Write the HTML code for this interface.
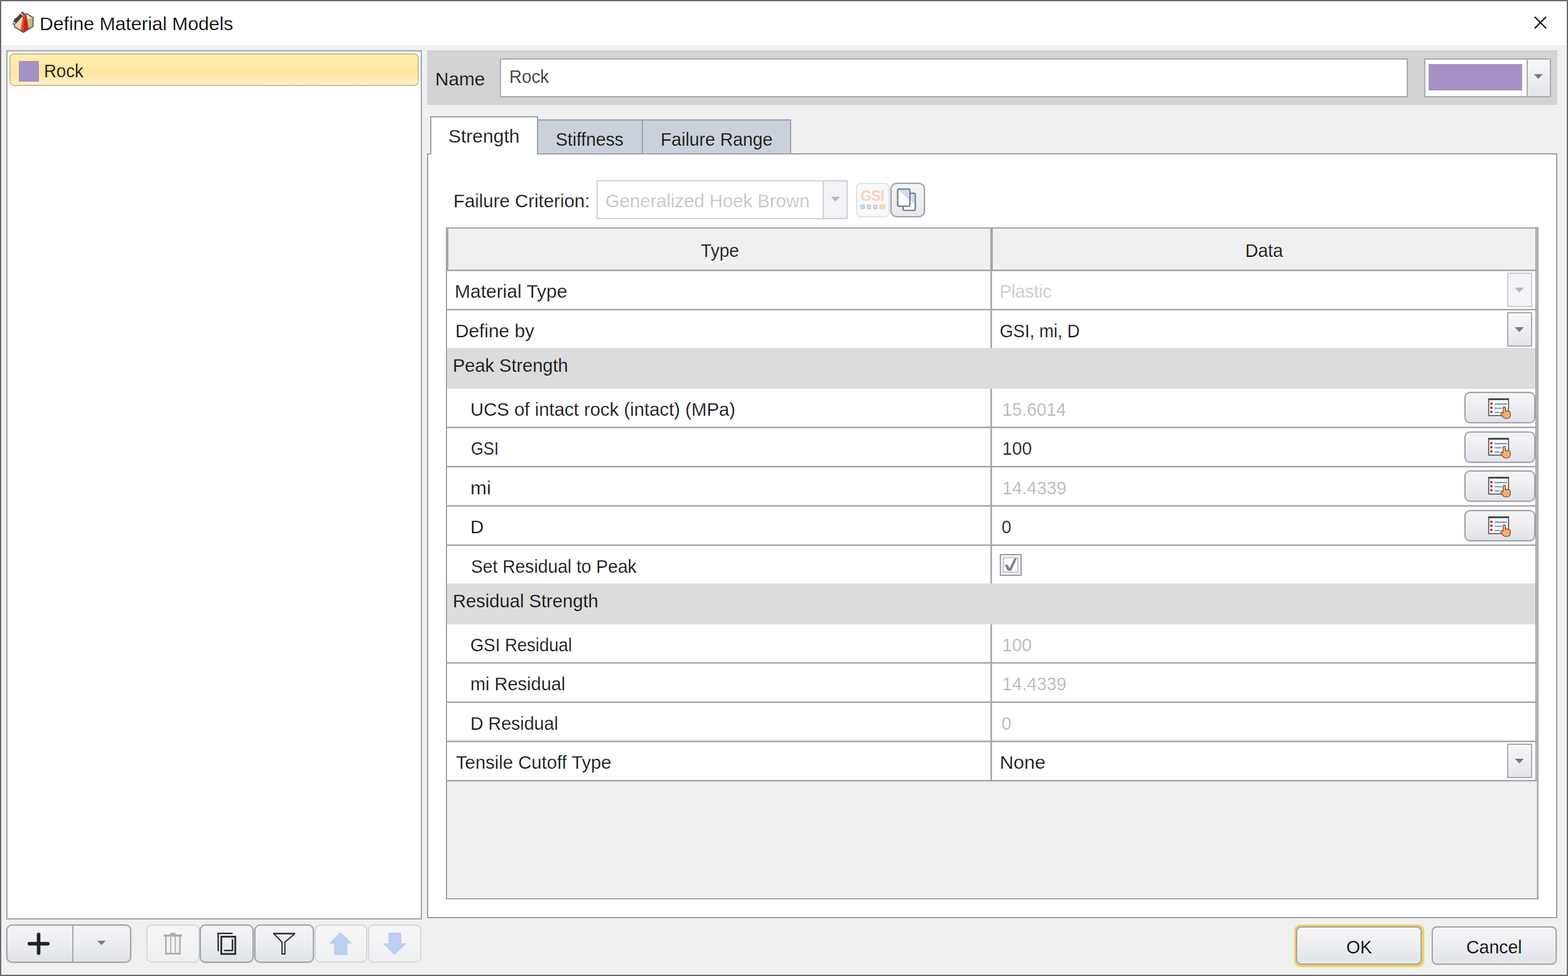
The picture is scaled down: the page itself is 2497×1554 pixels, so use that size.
<!DOCTYPE html>
<html lang="en">
<head>
<meta charset="utf-8">
<title>Define Material Models</title>
<style>
html,body{margin:0;padding:0;background:#f0f0f0;}
body{width:2497px;height:1554px;overflow:hidden;font-family:"Liberation Sans",sans-serif;}
#win{position:relative;width:2497px;height:1554px;background:#f0f0f0;overflow:hidden;}
.a,.t,svg{position:absolute;box-sizing:border-box;}
svg{overflow:visible;}
button{margin:0;padding:0;font:inherit;color:inherit;appearance:none;-webkit-appearance:none;outline:0;display:block;}
ul,li,h1{margin:0;padding:0;list-style:none;font:inherit;}
.g,table,thead,tbody,tr,th,td{display:contents;}
.t{-webkit-text-stroke:0.25px #fff;white-space:nowrap;line-height:40px;height:40px;font-size:29.5px;font-weight:400;transform-origin:0 0;}
.frame{border:2px solid #6a6a6a;pointer-events:none;}
.titlebar{background:#fff;}
.list{background:#fff;border:2px solid #a0a4ac;border-top-color:#9ba3b0;}
.item{border:2px solid #d0be8c;border-radius:7px;background:linear-gradient(#ffedab 0%,#ffe9a5 40%,#ffe6a0 58%,#fdf0c8 100%);}
.sw{background:#a591c5;}
.strip{background:#d3d3d3;}
.input{background:#fff;border:2px solid #a9abb0;}
.tab{border:2px solid #9da3ad;border-bottom:none;background:#cbd1da;}
.tab.sel{background:#fff;}
.tabline{background:#9da3ad;}
.panel{background:#fff;border:2px solid #9da3ad;}
.combo{background:#fff;border:2px solid #a9abb0;}
.combo.dis{border-color:#d0d1d4;}
.ddbtn{border:2px solid #a9abb0;background:linear-gradient(#f7f8f9,#e3e6ea);}
.ddbtn.dis{border-color:#cdcfd3;background:#f3f4f7;}
.btn{border:2px solid #9fa4ad;box-shadow:0 0 0 1px rgba(150,155,166,.22);border-radius:9px;background:linear-gradient(#f4f5f7 0%,#eceef1 50%,#dfe2e7 100%);}
.btn.big{border-radius:8px;border-color:#a1a5ad;box-shadow:inset 0 0 0 1px rgba(255,255,255,.55),0 0 0 1px rgba(150,155,166,.15);}
.btn.dis{box-shadow:none;border-color:#d6d8dc;background:linear-gradient(#f6f7f8,#eff0f2);}
.btn.gsi{border-color:#e2e3e6;background:#f7f8fa;border-radius:8px;}
.btn.cp{border-color:#a0a3a9;border-radius:10px;background:linear-gradient(#f3f4f6,#e8e9ec);}
.btn.pk{border-radius:9px;border-color:#a0a4ac;}
.sep{background:#a3a7af;}
.focus{border-radius:9.5px;background:#f3d35a;}
.table{background:#f0f0f0;border:2px solid #a3a3a3;}
.thead{background:#f0f0f0;}
.rows{background:#fff;}
.hl{background:#a6a6a6;}
.gap{background:#c9c9c9;}
.band{background:#dcdcdc;}
.chk{border:2px solid #9c9fa6;background:#eef1f6;}
.chk2{border:2px solid #c6c9cd;background:#fff;}
</style>
</head>
<body>
<div id="win" role="dialog" aria-label="Define Material Models">
  <header class="a titlebar" style="left:0px;top:0px;width:2497px;height:72px">
    <svg class="appicon" style="left:18px;top:16px" width="38" height="38" viewBox="18 16 38 38" aria-hidden="true"><g stroke-linejoin="round">
<polygon points="42.2,21.6 52.6,27.8 52.6,42.2 37.6,51.4 23.4,42.8 23.4,30.4" fill="#f2e4b7" stroke="#5f5a46" stroke-width="1.5"/>
<polygon points="38,33.5 52.8,27.6 52.8,42.3 37.6,52" fill="#c9b783"/>
<polygon points="23.2,30 38,33.5 37.6,52 23.2,43" fill="#eadaa8"/>
<polygon points="36.5,24.5 41.5,22 45.5,46.5 37.6,51.3 32.8,48.5" fill="#e8432e"/>
<polygon points="38.5,33 41.5,22 45.5,46.5 37.6,51.3" fill="#c61f2c"/>
<polygon points="23.2,42.2 37.6,51.2 37.6,52.4 23.2,43.6" fill="#7a4a3a"/>
<polygon points="42.2,21.6 52.6,27.8 52.6,42.2 37.6,51.4 23.4,42.8 23.4,30.4" fill="none" stroke="#5f5a46" stroke-width="1.4"/>
<path d="M35.6 18.3 L39.6 21.9 L25.6 37.2 L21.6 33.6 Z" fill="#3f4245"/>
<path d="M33.6 20.4 L37.7 24 L36.4 25.4 L32.3 21.8 Z" fill="#d9d9d9"/>
<path d="M21.6 33.6 L25.6 37.2 L20.4 39.2 Z" fill="#f4f4f4" stroke="#3f4245" stroke-width="0.8"/>
<path d="M21.3 36.9 L22.5 38 L20.4 39.2 Z" fill="#3f4245"/>
</g></svg>
    <h1 class="t" style="left:63.4px;top:17.77px;transform:scaleX(1.0217);color:#000">Define Material Models</h1>
    <div class="a close" style="left:2436px;top:18px;width:34px;height:36px" role="button" aria-label="Close">
      <svg class="ic" style="left:0px;top:0px" width="34" height="36" viewBox="2436 18 34 36" aria-hidden="true"><path d="M2443.9 26.7 L2462.2 45.2 M2462.2 26.7 L2443.9 45.2" stroke="#111" stroke-width="2.1" fill="none"/></svg>
    </div>
  </header>
  <aside class="g">
    <ul class="a list" style="left:10px;top:80px;width:662px;height:1384px" role="listbox" aria-label="Materials">
      <li class="a item" style="left:3px;top:3px;width:652px;height:52px" role="option" aria-selected="true">
        <span class="a sw" style="left:13px;top:10px;width:32px;height:33px"></span>
        <span class="t" style="left:52.7px;top:5.77px;transform:scaleX(0.9317);color:#111;-webkit-text-stroke-color:#ffe8a3">Rock</span>
      </li>
    </ul>
    <div class="g toolbar" role="toolbar" aria-label="Material list actions">
      <button class="a btn add" style="left:10px;top:1472px;width:199px;height:61px" type="button" aria-label="Add material">
        <span class="a sep" style="left:103px;top:0px;width:2px;height:57px"></span>
        <svg class="ic" style="left:-2px;top:-2px" width="199" height="61" viewBox="10 1472 199 61" aria-hidden="true"><path d="M61.5 1487.8 V1517.4 M46.7 1502.6 H76.3" stroke="#232327" stroke-width="5.6" stroke-linecap="round" fill="none"/><polygon points="154.7,1497.8 168.4,1497.8 161.55,1504.8" fill="#777a84"/></svg>
      </button>
      <button class="a btn dis" style="left:233px;top:1472px;width:85px;height:61px" type="button" aria-label="Delete" disabled>
        <svg class="ic" style="left:-2px;top:-2px" width="85" height="61" viewBox="233 1472 85 61" aria-hidden="true"><g fill="#acacac"><rect x="271.6" y="1485.3" width="8" height="2.9"/><rect x="260.7" y="1487.9" width="29.3" height="3.5"/><rect x="263" y="1491.4" width="2.4" height="28.4"/><rect x="285.3" y="1491.4" width="2.4" height="28.4"/><rect x="263" y="1517.1" width="24.7" height="2.7"/><rect x="271" y="1491.4" width="1.6" height="26"/><rect x="278.5" y="1491.4" width="1.6" height="26"/></g></svg>
      </button>
      <button class="a btn" style="left:318px;top:1472px;width:86px;height:61px" type="button" aria-label="Copy">
        <svg class="ic" style="left:-2px;top:-2px" width="86" height="61" viewBox="318 1472 86 61" aria-hidden="true"><g stroke="#2a2a2e" fill="none" stroke-linejoin="miter"><path d="M370.4 1486.1 H347.5 V1514.6" stroke-width="2.3"/><rect x="352.4" y="1491.4" width="22.3" height="27.5" stroke-width="2.8"/><path d="M370.2 1495.2 V1513.4 H356.7" stroke-width="2.3"/></g></svg>
      </button>
      <button class="a btn" style="left:405px;top:1472px;width:95px;height:61px" type="button" aria-label="Filter">
        <svg class="ic" style="left:-2px;top:-2px" width="95" height="61" viewBox="405 1472 95 61" aria-hidden="true"><g stroke="#2a2a2e" fill="none"><path d="M435 1486.6 H470.2" stroke-width="2.5"/><path d="M436.6 1487.4 L449.1 1500 V1519 H453.7 V1500 L468.6 1487.4" stroke-width="1.9"/></g></svg>
      </button>
      <button class="a btn dis" style="left:501px;top:1472px;width:84px;height:61px" type="button" aria-label="Move up" disabled>
        <svg class="ic" style="left:-2px;top:-2px" width="84" height="61" viewBox="501 1472 84 61" aria-hidden="true"><polygon points="542,1484.8 559.7,1502 552.5,1502 552.5,1520 532.8,1520 532.8,1502 525,1502" fill="#bccff4" stroke="#aec4ef" stroke-width="0.8"/></svg>
      </button>
      <button class="a btn dis" style="left:586px;top:1472px;width:85px;height:61px" type="button" aria-label="Move down" disabled>
        <svg class="ic" style="left:-2px;top:-2px" width="85" height="61" viewBox="586 1472 85 61" aria-hidden="true"><polygon points="619.3,1485.4 638.4,1485.4 638.4,1502.7 646.2,1502.7 628.3,1520 610.4,1502.7 619.3,1502.7" fill="#bccff4" stroke="#aec4ef" stroke-width="0.8"/></svg>
      </button>
    </div>
  </aside>
  <main class="g">
    <div class="a strip" style="left:680px;top:80px;width:1800px;height:87px">
      <label class="t" style="left:12.57px;top:25.77px;transform:scaleX(1.0081);color:#111;-webkit-text-stroke-color:#d4d4d4">Name</label>
      <div class="a input" style="left:116px;top:13px;width:1446px;height:62px" role="textbox" aria-label="Name">
        <span class="t" style="left:13.1px;top:6.77px;transform:scaleX(0.9388);color:#333">Rock</span>
      </div>
      <div class="a input colour" style="left:1588px;top:13px;width:202px;height:62px" role="combobox" aria-label="Colour">
        <span class="a sw" style="left:5px;top:7px;width:149px;height:42px"></span>
        <span class="a ddbtn" style="left:161px;top:-2px;width:39px;height:62px">
          <svg class="ic" style="left:-2px;top:-2px" width="39" height="62" viewBox="2431 93 39 62" aria-hidden="true"><polygon points="2442.7,118 2456.7,118 2449.7,125.7" fill="#777a84"/></svg>
        </span>
      </div>
    </div>
    <section class="a panel" style="left:680px;top:244px;width:1800px;height:1218px" role="tabpanel" aria-label="Strength">
      <label class="t" style="left:39.99px;top:54.07px;transform:scaleX(0.9966);color:#111">Failure Criterion:</label>
      <div class="a combo dis" style="left:268px;top:41px;width:400px;height:62px" role="combobox" aria-disabled="true" aria-label="Failure Criterion">
        <span class="t" style="left:11.54px;top:11.07px;transform:scaleX(0.9917);color:#c4c4c4">Generalized Hoek Brown</span>
        <span class="a ddbtn dis" style="left:358px;top:-2px;width:40px;height:62px">
          <svg class="ic" style="left:-2px;top:-2px" width="40" height="62" viewBox="1310 287 40 62" aria-hidden="true"><polygon points="1323.2,313.3 1337.6,313.3 1330.4,321" fill="#b6b7ba"/></svg>
        </span>
      </div>
      <button class="a btn dis gsi" style="left:681px;top:45px;width:54px;height:55px" type="button" aria-label="GSI calculator" disabled>
        <svg class="ic" style="left:-2px;top:-2px" width="54" height="55" viewBox="1363 291 54 55" aria-hidden="true"><text x="1370.6" y="320" font-family="Liberation Sans, sans-serif" font-weight="bold" font-size="23.6" textLength="38" lengthAdjust="spacingAndGlyphs" fill="#f8d1ba">GSI</text><g fill="#b7cfe1"><rect x="1370.2" y="325.7" width="6.8" height="7.3"/><rect x="1380.6" y="325.7" width="6.6" height="7.3"/><rect x="1390.7" y="325.7" width="6.6" height="7.3"/></g><rect x="1400.4" y="325.7" width="9.2" height="7.3" fill="#fbd0aa"/><g fill="#e3eff8"><rect x="1372.4" y="328.1" width="2.5" height="2.6"/><rect x="1382.7" y="328.1" width="2.5" height="2.6"/><rect x="1392.8" y="328.1" width="2.5" height="2.6"/></g><rect x="1403.3" y="328.1" width="3.4" height="2.6" fill="#fde3c9"/></svg>
      </button>
      <button class="a btn cp" style="left:736px;top:45px;width:55px;height:55px" type="button" aria-label="Copy">
        <svg class="ic" style="left:-2px;top:-2px" width="55" height="55" viewBox="1418 291 55 55" aria-hidden="true"><g stroke="#6f7a8e" stroke-width="1.8" stroke-linejoin="round"><rect x="1438.3" y="307.7" width="19.2" height="27.4" rx="2.3" fill="#fff"/><path d="M1439.6 308.8 H1455 q1.5 0 1.5 1.5 V326 Z" fill="#cfdbee" stroke="none"/><rect x="1438.3" y="307.7" width="19.2" height="27.4" rx="2.3" fill="none"/><rect x="1429.5" y="301" width="19.6" height="27.4" rx="2.3" fill="#fff"/><path d="M1430.8 302 H1446.8 q1.4 0 1.4 1.4 V319.6 Z" fill="#cfdbee" stroke="none"/><rect x="1429.5" y="301" width="19.6" height="27.4" rx="2.3" fill="none"/></g></svg>
      </button>
      <div class="a table" style="left:28px;top:116px;width:1740px;height:1070px">
        <div class="a thead" style="left:0px;top:0px;width:1736px;height:66px"></div>
        <div class="a rows" style="left:0px;top:66px;width:1735px;height:814px"></div>
        <div class="a hl" style="left:865px;top:0px;width:4px;height:66px"></div>
        <div class="a hl" style="left:0px;top:0px;width:2px;height:66px"></div>
        <div class="a hl" style="left:1733px;top:0px;width:2px;height:880px"></div>
        <svg class="gridlines" style="left:0px;top:0px" width="1736" height="1066" viewBox="712 364 1736 1066" aria-hidden="true"><g fill="#a3a3a3"><rect x="712" y="429.30" width="1735" height="2.4"/><rect x="712" y="491.80" width="1735" height="2.4"/><rect x="712" y="679.30" width="1735" height="2.4"/><rect x="712" y="741.80" width="1735" height="2.4"/><rect x="712" y="804.30" width="1735" height="2.4"/><rect x="712" y="866.80" width="1735" height="2.4"/><rect x="712" y="1054.30" width="1735" height="2.4"/><rect x="712" y="1116.80" width="1735" height="2.4"/><rect x="712" y="1179.30" width="1735" height="2.4"/><rect x="712" y="1241.80" width="1735" height="2.4"/><rect x="1577.2" y="430" width="2.5" height="124"/><rect x="1577.2" y="619" width="2.5" height="310"/><rect x="1577.2" y="994" width="2.5" height="249.7"/></g></svg>
        <div class="a gap" style="left:1735px;top:0px;width:1px;height:1066px"></div>
        <table>
          <thead>
            <tr>
              <th scope="col">
                <span class="t" style="left:403.91px;top:14.67px;transform:scaleX(0.9536);color:#111;-webkit-text-stroke-color:#f0f0f0">Type</span>
              </th>
              <th scope="col">
                <span class="t" style="left:1270.65px;top:14.67px;transform:scaleX(0.9643);color:#111;-webkit-text-stroke-color:#f0f0f0">Data</span>
              </th>
            </tr>
          </thead>
          <tbody>
            <tr>
              <th scope="row">
                <span class="t" style="left:12.45px;top:79.87px;transform:scaleX(1.0161);color:#111">Material Type</span>
              </th>
              <td>
                <span class="t" style="left:880.11px;top:79.87px;transform:scaleX(0.9479);color:#c8c8c8">Plastic</span>
                <span class="a ddbtn dis" style="left:1688px;top:70px;width:40px;height:55px" role="button" aria-label="Material Type" aria-disabled="true">
                  <svg class="ic" style="left:-2px;top:-2px" width="40" height="55" viewBox="2400 434 40 55" aria-hidden="true"><polygon points="2412.3,458 2426.7,458 2419.5,465.7" fill="#b6b7ba"/></svg>
                </span>
              </td>
            </tr>
            <tr>
              <th scope="row">
                <span class="t" style="left:12.51px;top:143.37px;transform:scaleX(1.0100);color:#111">Define by</span>
              </th>
              <td>
                <span class="t" style="left:880.26px;top:143.37px;transform:scaleX(0.9374);color:#111">GSI, mi, D</span>
                <span class="a ddbtn" style="left:1688px;top:133px;width:40px;height:55px" role="button" aria-label="Define by">
                  <svg class="ic" style="left:-2px;top:-2px" width="40" height="55" viewBox="2400 497 40 55" aria-hidden="true"><polygon points="2412.3,521 2426.7,521 2419.5,528.7" fill="#777a84"/></svg>
                </span>
              </td>
            </tr>
            <tr class="grp">
              <th colspan="2" scope="rowgroup">
                <span class="a band" style="left:0px;top:190px;width:1733px;height:65px"></span>
                <span class="t" style="left:9.34px;top:197.57px;transform:scaleX(0.9820);color:#111;-webkit-text-stroke-color:#dcdcdc">Peak Strength</span>
              </th>
            </tr>
            <tr>
              <th scope="row">
                <span class="t" style="left:36.73px;top:268.37px;transform:scaleX(0.9941);color:#111">UCS of intact rock (intact) (MPa)</span>
              </th>
              <td>
                <span class="t" style="left:883.98px;top:268.37px;transform:scaleX(0.9543);color:#b8b8b8">15.6014</span>
                <button class="a btn pk" style="left:1620px;top:260px;width:113px;height:50px" type="button" aria-label="Pick UCS">
                  <svg class="ic" style="left:-2px;top:-2px" width="113" height="50" viewBox="2332 624 113 50" aria-hidden="true"><g transform="translate(2332,624)"><rect x="38.7" y="11.6" width="31.6" height="26" fill="#fff" stroke="#4d4d4d" stroke-width="1.6"/><rect x="37.9" y="10.2" width="33.2" height="2.9" fill="#454545"/><g fill="#cf1524"><rect x="41.2" y="16.9" width="3.5" height="3.6" rx=".8"/><rect x="41.2" y="23.3" width="3.5" height="3.6" rx=".8"/><rect x="41.2" y="29.9" width="3.5" height="3.6" rx=".8"/></g><path d="M48.1 19.4 H68 M48.1 26 H60 M48.1 32.6 H56" stroke="#3f86d9" stroke-width="1.7" fill="none"/><path d="M61.6 26.2 q0-2.6 1.9-2.6 q1.9 0 1.9 2.6 v4.6 q1.3-1.3 2.6-.2 q1.6-1 2.6 .6 q2.6-.4 2.6 2.4 v3 q0 5.6 -5.4 5.6 h-2.4 q-2.6 0 -4.4 -2.6 l-2.9 -4.3 q-.9 -1.6 .5 -2.5 q1.4 -.7 2.4 .6 l.6 .8 z" fill="#f6ad6d" stroke="#7a4516" stroke-width="1.15" stroke-linejoin="round"/></g></svg>
                </button>
              </td>
            </tr>
            <tr>
              <th scope="row">
                <span class="t" style="left:37.81px;top:329.87px;transform:scaleX(0.8660);color:#111">GSI</span>
              </th>
              <td>
                <span class="t" style="left:883.92px;top:329.87px;transform:scaleX(0.9579);color:#222">100</span>
                <button class="a btn pk" style="left:1620px;top:323px;width:113px;height:50px" type="button" aria-label="Pick GSI">
                  <svg class="ic" style="left:-2px;top:-2px" width="113" height="50" viewBox="2332 687 113 50" aria-hidden="true"><g transform="translate(2332,687)"><rect x="38.7" y="11.6" width="31.6" height="26" fill="#fff" stroke="#4d4d4d" stroke-width="1.6"/><rect x="37.9" y="10.2" width="33.2" height="2.9" fill="#454545"/><g fill="#cf1524"><rect x="41.2" y="16.9" width="3.5" height="3.6" rx=".8"/><rect x="41.2" y="23.3" width="3.5" height="3.6" rx=".8"/><rect x="41.2" y="29.9" width="3.5" height="3.6" rx=".8"/></g><path d="M48.1 19.4 H68 M48.1 26 H60 M48.1 32.6 H56" stroke="#3f86d9" stroke-width="1.7" fill="none"/><path d="M61.6 26.2 q0-2.6 1.9-2.6 q1.9 0 1.9 2.6 v4.6 q1.3-1.3 2.6-.2 q1.6-1 2.6 .6 q2.6-.4 2.6 2.4 v3 q0 5.6 -5.4 5.6 h-2.4 q-2.6 0 -4.4 -2.6 l-2.9 -4.3 q-.9 -1.6 .5 -2.5 q1.4 -.7 2.4 .6 l.6 .8 z" fill="#f6ad6d" stroke="#7a4516" stroke-width="1.15" stroke-linejoin="round"/></g></svg>
                </button>
              </td>
            </tr>
            <tr>
              <th scope="row">
                <span class="t" style="left:36.84px;top:393.37px;transform:scaleX(1.0574);color:#111">mi</span>
              </th>
              <td>
                <span class="t" style="left:883.97px;top:393.37px;transform:scaleX(0.9589);color:#b8b8b8">14.4339</span>
                <button class="a btn pk" style="left:1620px;top:385px;width:113px;height:50px" type="button" aria-label="Pick mi">
                  <svg class="ic" style="left:-2px;top:-2px" width="113" height="50" viewBox="2332 749 113 50" aria-hidden="true"><g transform="translate(2332,749)"><rect x="38.7" y="11.6" width="31.6" height="26" fill="#fff" stroke="#4d4d4d" stroke-width="1.6"/><rect x="37.9" y="10.2" width="33.2" height="2.9" fill="#454545"/><g fill="#cf1524"><rect x="41.2" y="16.9" width="3.5" height="3.6" rx=".8"/><rect x="41.2" y="23.3" width="3.5" height="3.6" rx=".8"/><rect x="41.2" y="29.9" width="3.5" height="3.6" rx=".8"/></g><path d="M48.1 19.4 H68 M48.1 26 H60 M48.1 32.6 H56" stroke="#3f86d9" stroke-width="1.7" fill="none"/><path d="M61.6 26.2 q0-2.6 1.9-2.6 q1.9 0 1.9 2.6 v4.6 q1.3-1.3 2.6-.2 q1.6-1 2.6 .6 q2.6-.4 2.6 2.4 v3 q0 5.6 -5.4 5.6 h-2.4 q-2.6 0 -4.4 -2.6 l-2.9 -4.3 q-.9 -1.6 .5 -2.5 q1.4 -.7 2.4 .6 l.6 .8 z" fill="#f6ad6d" stroke="#7a4516" stroke-width="1.15" stroke-linejoin="round"/></g></svg>
                </button>
              </td>
            </tr>
            <tr>
              <th scope="row">
                <span class="t" style="left:37.4px;top:454.87px;transform:scaleX(0.9988);color:#111">D</span>
              </th>
              <td>
                <span class="t" style="left:883.21px;top:454.87px;transform:scaleX(0.9424);color:#222">0</span>
                <button class="a btn pk" style="left:1620px;top:448px;width:113px;height:50px" type="button" aria-label="Pick D">
                  <svg class="ic" style="left:-2px;top:-2px" width="113" height="50" viewBox="2332 812 113 50" aria-hidden="true"><g transform="translate(2332,812)"><rect x="38.7" y="11.6" width="31.6" height="26" fill="#fff" stroke="#4d4d4d" stroke-width="1.6"/><rect x="37.9" y="10.2" width="33.2" height="2.9" fill="#454545"/><g fill="#cf1524"><rect x="41.2" y="16.9" width="3.5" height="3.6" rx=".8"/><rect x="41.2" y="23.3" width="3.5" height="3.6" rx=".8"/><rect x="41.2" y="29.9" width="3.5" height="3.6" rx=".8"/></g><path d="M48.1 19.4 H68 M48.1 26 H60 M48.1 32.6 H56" stroke="#3f86d9" stroke-width="1.7" fill="none"/><path d="M61.6 26.2 q0-2.6 1.9-2.6 q1.9 0 1.9 2.6 v4.6 q1.3-1.3 2.6-.2 q1.6-1 2.6 .6 q2.6-.4 2.6 2.4 v3 q0 5.6 -5.4 5.6 h-2.4 q-2.6 0 -4.4 -2.6 l-2.9 -4.3 q-.9 -1.6 .5 -2.5 q1.4 -.7 2.4 .6 l.6 .8 z" fill="#f6ad6d" stroke="#7a4516" stroke-width="1.15" stroke-linejoin="round"/></g></svg>
                </button>
              </td>
            </tr>
            <tr>
              <th scope="row">
                <span class="t" style="left:38.39px;top:518.37px;transform:scaleX(0.9572);color:#111">Set Residual to Peak</span>
              </th>
              <td>
                <span class="a chk" style="left:880px;top:518px;width:35px;height:35px" role="checkbox" aria-checked="true" aria-label="Set Residual to Peak">
                  <span class="a chk2" style="left:3px;top:3px;width:25px;height:25px"></span>
                  <svg class="ic" style="left:-2px;top:-2px" width="35" height="35" viewBox="1592 882 35 35" aria-hidden="true"><polygon points="1599.9,899.3 1604.8,899.3 1607.8,905 1615.5,889.1 1619.2,889.1 1610.2,908.7 1604.9,908.7" fill="#7b7c88"/></svg>
                </span>
              </td>
            </tr>
            <tr class="grp">
              <th colspan="2" scope="rowgroup">
                <span class="a band" style="left:0px;top:565px;width:1733px;height:65px"></span>
                <span class="t" style="left:9.29px;top:572.57px;transform:scaleX(0.9884);color:#111;-webkit-text-stroke-color:#dcdcdc">Residual Strength</span>
              </th>
            </tr>
            <tr>
              <th scope="row">
                <span class="t" style="left:37.49px;top:643.37px;transform:scaleX(0.9314);color:#111">GSI Residual</span>
              </th>
              <td>
                <span class="t" style="left:883.99px;top:643.37px;transform:scaleX(0.9552);color:#b8b8b8">100</span>
              </td>
            </tr>
            <tr>
              <th scope="row">
                <span class="t" style="left:37.3px;top:704.87px;transform:scaleX(0.9817);color:#111">mi Residual</span>
              </th>
              <td>
                <span class="t" style="left:883.97px;top:704.87px;transform:scaleX(0.9589);color:#b8b8b8">14.4339</span>
              </td>
            </tr>
            <tr>
              <th scope="row">
                <span class="t" style="left:36.62px;top:768.37px;transform:scaleX(0.9684);color:#111">D Residual</span>
              </th>
              <td>
                <span class="t" style="left:883.26px;top:768.37px;transform:scaleX(0.9384);color:#b8b8b8">0</span>
              </td>
            </tr>
            <tr>
              <th scope="row">
                <span class="t" style="left:13.95px;top:829.87px;transform:scaleX(0.9911);color:#111">Tensile Cutoff Type</span>
              </th>
              <td>
                <span class="t" style="left:880.37px;top:829.87px;transform:scaleX(1.0348);color:#111">None</span>
                <span class="a ddbtn" style="left:1688px;top:820px;width:40px;height:55px" role="button" aria-label="Tensile Cutoff Type">
                  <svg class="ic" style="left:-2px;top:-2px" width="40" height="55" viewBox="2400 1184 40 55" aria-hidden="true"><polygon points="2412.3,1208 2426.7,1208 2419.5,1215.7" fill="#777a84"/></svg>
                </span>
              </td>
            </tr>
          </tbody>
        </table>
      </div>
    </section>
    <div class="g tabs" role="tablist">
      <div class="a tab" style="left:855px;top:190px;width:169px;height:56px" role="tab" aria-selected="false">
        <span class="t" style="left:28.27px;top:9.87px;transform:scaleX(0.9586);color:#111;-webkit-text-stroke-color:#cbd1da">Stiffness</span>
      </div>
      <div class="a tab" style="left:1022px;top:190px;width:238px;height:56px" role="tab" aria-selected="false">
        <span class="t" style="left:27.52px;top:9.87px;transform:scaleX(0.9629);color:#111;-webkit-text-stroke-color:#cbd1da">Failure Range</span>
      </div>
      <div class="a tab sel" style="left:685px;top:185px;width:172px;height:61px" role="tab" aria-selected="true">
        <span class="t" style="left:27.12px;top:9.77px;transform:scaleX(1.0172);color:#111">Strength</span>
      </div>
      <div class="a tabline" style="left:857px;top:244px;width:403px;height:2px"></div>
    </div>
  </main>
  <footer class="g">
    <div class="a focus" style="left:2061px;top:1472px;width:207px;height:68px"></div>
    <button class="a btn big" style="left:2064px;top:1475px;width:200px;height:61px" type="button">
      <span class="t" style="left:78.23px;top:11.47px;transform:scaleX(0.9566);color:#000;-webkit-text-stroke-color:#ebecef">OK</span>
    </button>
    <button class="a btn big" style="left:2280px;top:1475px;width:199px;height:61px" type="button">
      <span class="t" style="left:52.54px;top:11.47px;transform:scaleX(0.9656);color:#000;-webkit-text-stroke-color:#ebecef">Cancel</span>
    </button>
  </footer>
  <div class="a frame" style="left:0px;top:0px;width:2497px;height:1554px"></div>
</div>
</body>
</html>
